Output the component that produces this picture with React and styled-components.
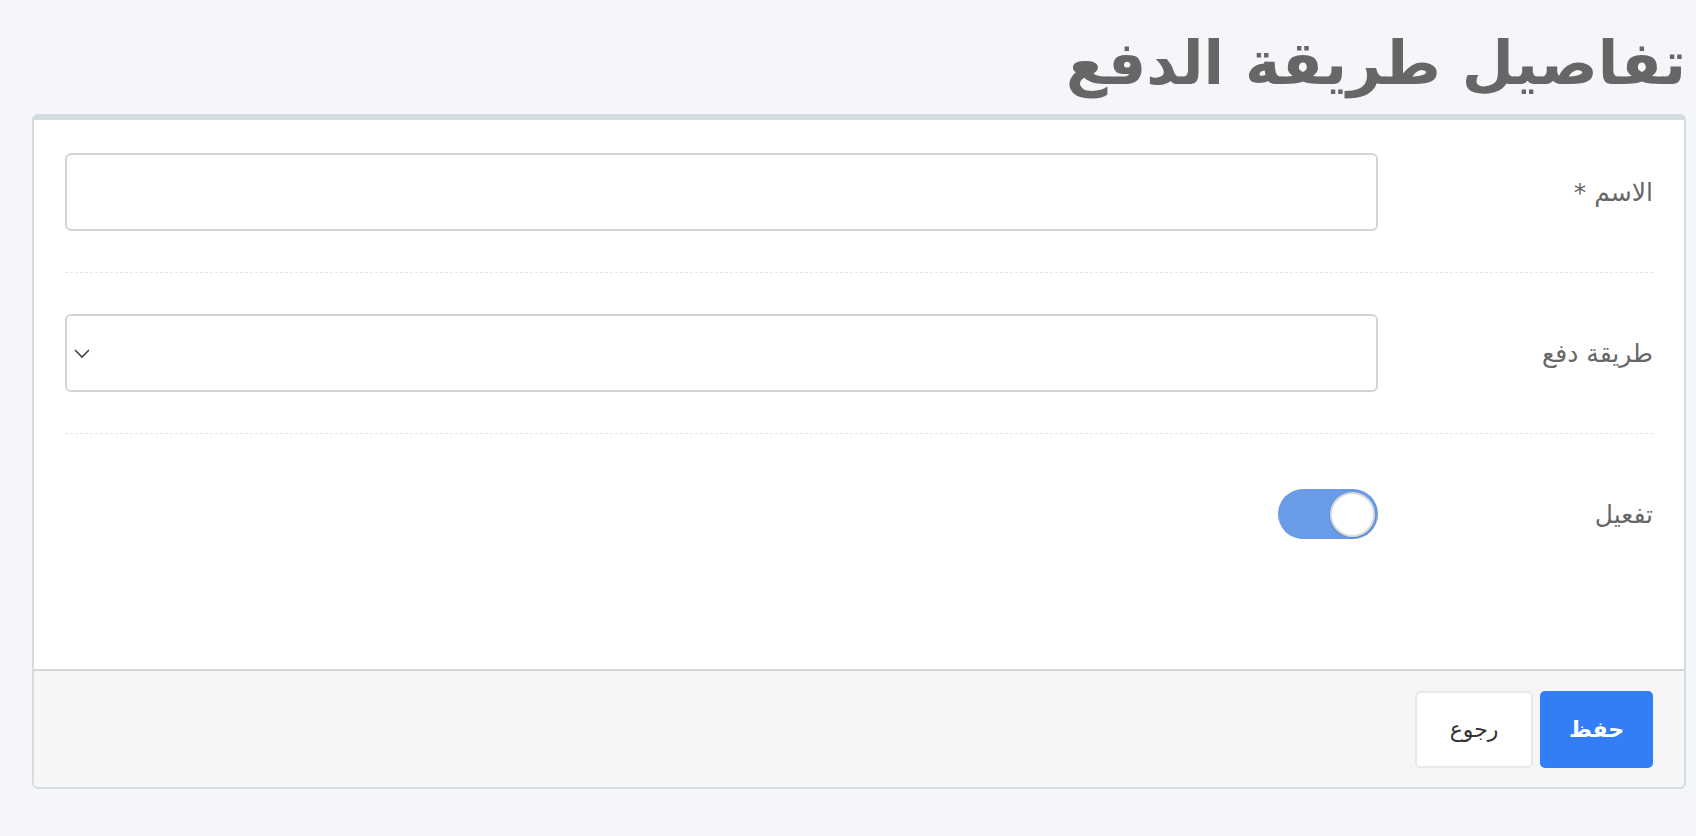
import styled, { createGlobalStyle } from 'styled-components';

const GlobalStyle = createGlobalStyle`
  html, body {
    margin: 0;
    padding: 0;
    background: #f4f6fa;
    font-family: "DejaVu Sans", "Noto Sans", sans-serif;
  }
`;

const Page = styled.div`
  direction: rtl;
  padding: 0 10px 0 32px;
`;

const Title = styled.h1`
  margin: 0;
  height: 114px;
  padding-top: 18px;
  box-sizing: border-box;
  font-size: 60px;
  font-weight: bold;
  color: #666;
  line-height: 90px;
  letter-spacing: -0.5px;
`;

const Card = styled.div`
  background: #fff;
  border: 2px solid #d3dbe3;
  border-top-width: 6px;
  border-radius: 6px;
  overflow: hidden;
`;

const Body = styled.div`
  padding: 33px 31px 116px 31px;
`;

const Row = styled.div`
  display: grid;
  grid-template-columns: 275px 1fr;
  align-items: center;
  padding: ${(p) => (p.$first ? '0' : '41px')} 0 ${(p) => (p.$last ? '0' : '41px')};
  border-bottom: ${(p) => (p.$last ? 'none' : '1px dashed #e6e6e6')};
`;

const Label = styled.label`
  font-size: 25px;
  color: #666;
`;

const Field = styled.div`
  height: 78px;
  display: flex;
  align-items: center;
`;

const Input = styled.input`
  width: 100%;
  height: 78px;
  box-sizing: border-box;
  border: 2px solid #d0d5da;
  border-radius: 6px;
  background: #fff;
  font-size: 20px;
  padding: 0 12px;
  outline: none;
`;

const Select = styled.div`
  width: 100%;
  height: 78px;
  box-sizing: border-box;
  border: 2px solid #d0d5da;
  border-radius: 6px;
  background: #fff;
  display: flex;
  align-items: center;
  justify-content: flex-end;
  padding-left: 6px;
`;

const Toggle = styled.div`
  width: 100px;
  height: 50px;
  border-radius: 25px;
  background: #6a9be6;
  display: flex;
  align-items: center;
  justify-content: flex-start;
  padding: 0 3px;
  box-sizing: border-box;
`;

const Knob = styled.div`
  width: 45px;
  height: 45px;
  border-radius: 50%;
  background: #fff;
  box-sizing: border-box;
  border: 2px solid #d9d9d9;
  box-shadow: 0 1px 2px rgba(0, 0, 0, 0.15);
`;

const Footer = styled.div`
  background: #f6f6f6;
  border-top: 2px solid #d6d6d6;
  padding: 20px 31px 19px;
  display: flex;
  gap: 7px;
`;

const Button = styled.button`
  height: 77px;
  width: ${(p) => (p.$primary ? '113px' : '118px')};
  border-radius: 5px;
  border: 2px solid ${(p) => (p.$primary ? '#337ef6' : '#e8e8e8')};
  background: ${(p) => (p.$primary ? '#337ef6' : '#fff')};
  color: ${(p) => (p.$primary ? '#fff' : '#333')};
  font-family: "DejaVu Sans", sans-serif;
  font-size: 22px;
  font-weight: ${(p) => (p.$primary ? 'bold' : 'normal')};
  cursor: pointer;
`;

const Chevron = () => (
  <svg width="18" height="12" viewBox="0 0 18 12">
    <path d="M2 3 L9 10 L16 3" fill="none" stroke="#444" strokeWidth="1.6" />
  </svg>
);

const App = () => {
  return (
    <Page>
      <GlobalStyle />
      <Title>تفاصيل طريقة الدفع</Title>
      <Card>
        <Body>
          <Row $first>
            <Label>الاسم *</Label>
            <Field>
              <Input />
            </Field>
          </Row>
          <Row>
            <Label>طريقة دفع</Label>
            <Field>
              <Select>
                <Chevron />
              </Select>
            </Field>
          </Row>
          <Row $last>
            <Label>تفعيل</Label>
            <Field>
              <Toggle>
                <Knob />
              </Toggle>
            </Field>
          </Row>
        </Body>
        <Footer>
          <Button $primary>حفظ</Button>
          <Button>رجوع</Button>
        </Footer>
      </Card>
    </Page>
  );
};

export default App;
